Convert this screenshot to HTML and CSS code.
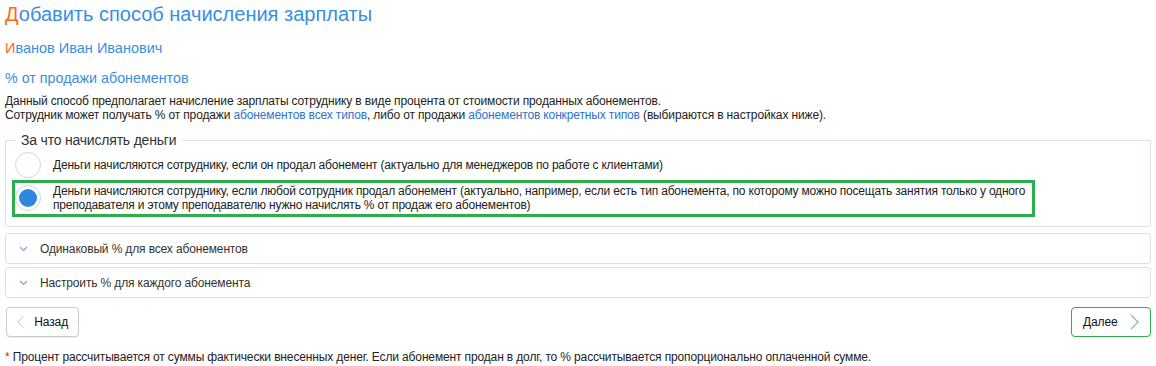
FILE: index.html
```html
<!DOCTYPE html>
<html>
<head>
    <meta charset="utf-8">
    <title>Добавить способ начисления зарплаты</title>
    <link rel="stylesheet" href="styles.css">
</head>
<body>
<div class="page">
    <h1 class="title"><span class="first">Д</span>обавить способ начисления зарплаты</h1>
    <div class="person"><span class="first">И</span>ванов Иван Иванович</div>
    <div class="method">% от продажи абонементов</div>
    <p class="descr">
        Данный способ предполагает начисление зарплаты сотруднику в виде процента от стоимости проданных абонементов.<br>
        Сотрудник может получать % от продажи <a href="#">абонементов всех типов</a>, либо от продажи <a href="#">абонементов конкретных типов</a> (выбираются в настройках ниже).
    </p>

    <fieldset class="box">
        <legend>За что начислять деньги</legend>
        <label class="opt">
            <span class="radio"></span>
            <span class="opt-text">Деньги начисляются сотруднику, если он продал абонемент (актуально для менеджеров по работе с клиентами)</span>
        </label>
        <label class="opt opt-active">
            <span class="radio checked"></span>
            <span class="opt-text">Деньги начисляются сотруднику, если любой сотрудник продал абонемент (актуально, например, если есть тип абонемента, по которому можно посещать занятия только у одного преподавателя и этому преподавателю нужно начислять % от продаж его абонементов)</span>
        </label>
    </fieldset>

    <div class="acc">
        <svg class="chev" width="9" height="6" viewBox="0 0 9 6"><path d="M1 1l3.5 3.5L8 1" fill="none" stroke="#6aa6e0" stroke-width="1.1"/></svg>
        <span>Одинаковый % для всех абонементов</span>
    </div>
    <div class="acc">
        <svg class="chev" width="9" height="6" viewBox="0 0 9 6"><path d="M1 1l3.5 3.5L8 1" fill="none" stroke="#6aa6e0" stroke-width="1.1"/></svg>
        <span>Настроить % для каждого абонемента</span>
    </div>

    <div class="buttons">
        <button class="btn btn-back">
            <svg width="9" height="16" viewBox="0 0 9 16"><path d="M8 1L1 8l7 7" fill="none" stroke="#c4c4c4" stroke-width="1.2"/></svg>
            Назад
        </button>
        <button class="btn btn-next">
            Далее
            <svg width="9" height="16" viewBox="0 0 9 16"><path d="M1 1l7 7-7 7" fill="none" stroke="#7cc68c" stroke-width="1.2"/></svg>
        </button>
    </div>

    <div class="note"><span class="red">*</span> Процент рассчитывается от суммы фактически внесенных денег. Если абонемент продан в долг, то % рассчитывается пропорционально оплаченной сумме.</div>
</div>
</body>
</html>
```

FILE: styles.css
```css
* { box-sizing: border-box; }
body {
    margin: 0;
    padding: 0;
    font: 12px "Liberation Sans", Arial, sans-serif;
    letter-spacing: -0.14px;
    color: #222;
    background: #fff;
}
.page {
    padding: 0 5px;
}
.first { color: #ff6a13; }
.title {
    margin: 0;
    padding-top: 1px;
    font-size: 20px;
    font-weight: normal;
    line-height: 26px;
    letter-spacing: 0;
    color: #3a8ee0;
}
.person {
    margin-top: 12px;
    font-size: 14.5px;
    line-height: 18px;
    letter-spacing: 0;
    color: #3a8ee0;
}
.method {
    margin-top: 13px;
    font-size: 14.3px;
    line-height: 17px;
    letter-spacing: 0;
    color: #3a8ee0;
}
.descr {
    margin: 7px 0 0;
    line-height: 14px;
    color: #222;
}
.descr a {
    color: #2f72c8;
    text-decoration: none;
}
.box {
    margin: 10px 0 0;
    padding: 1px 6px 9px 6px;
    border: 1px solid #d3e2ec;
    border-radius: 2px;
    min-width: 0;
}
.box legend {
    padding: 0 5px;
    margin-left: 4px;
    font-size: 14px;
    line-height: 16px;
    letter-spacing: -0.2px;
    color: #333;
}
.opt {
    display: flex;
    align-items: center;
    gap: 12px;
    padding: 0;
    border: 3px solid transparent;
    width: 1023px;
    color: #222;
}
.opt-active {
    border-color: #2eae4a;
    margin-top: -1px;
    padding: 1px 0 2px;
}
.radio {
    flex: none;
    width: 26px;
    height: 26px;
    border: 1px solid #c6dbe8;
    border-radius: 50%;
    display: flex;
    align-items: center;
    justify-content: center;
    background: #fff;
}
.radio.checked::after {
    content: "";
    width: 18px;
    height: 18px;
    border-radius: 50%;
    background: #2f86de;
}
.opt-text {
    line-height: 14px;
    letter-spacing: -0.2px;
}
.acc {
    display: flex;
    align-items: center;
    gap: 12px;
    margin-top: 6px;
    height: 31px;
    padding-left: 13px;
    border: 1px solid #d3e2ec;
    border-radius: 4px;
    color: #333;
}
.acc + .acc { margin-top: 3px; }
.buttons {
    display: flex;
    justify-content: space-between;
    margin-top: 9px;
    padding-left: 1px;
}
.btn {
    display: flex;
    align-items: center;
    gap: 10px;
    height: 30px;
    padding: 0 10px;
    background: #fff;
    border: 1px solid #ccc;
    border-radius: 4px;
    font: 12px "Liberation Sans", Arial, sans-serif;
    letter-spacing: -0.14px;
    color: #111;
    box-shadow: 0 1px 1px rgba(0,0,0,0.08);
}
.btn-back { width: 73px; }
.btn-next {
    width: 80px;
    border-color: #3aa856;
    padding-left: 11px;
    gap: 13px;
}
.note {
    margin-top: 13px;
    line-height: 14px;
    color: #222;
}
.red { color: #e0201b; }
```
